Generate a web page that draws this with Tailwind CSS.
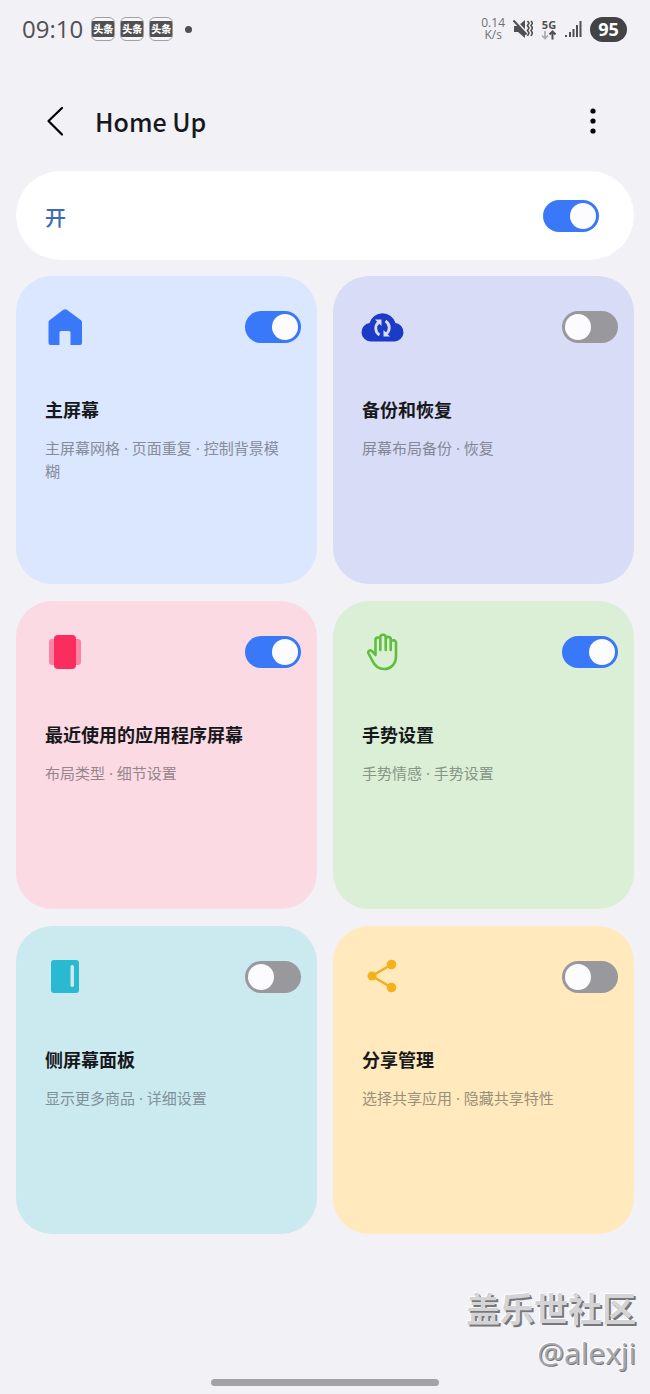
<!DOCTYPE html>
<html lang="zh-CN">
<head>
  <meta charset="UTF-8" />
  <meta name="viewport" content="width=device-width, initial-scale=1.0" />
  <title>Home Up</title>
  <script src="https://cdn.jsdelivr.net/npm/@tailwindcss/browser@4"></script>
</head>
<body class="min-h-screen flex flex-col bg-[#f1f1f6] text-[#17181c] font-['Noto_Sans_CJK_SC',sans-serif]">

  <!-- Status bar -->
  <div class="flex items-center justify-between h-[58px] pl-[22px] pr-[23px] text-[#505052]">
    <div class="flex items-center">
      <span class="text-[24px] leading-8 font-['Open_Sans',sans-serif]">09:10</span>
      <div class="flex gap-[5px] ml-2">
        <span class="flex items-center w-6 h-6 border border-[#a0a0a2] rounded-md bg-[#f7f7f9] overflow-hidden"><b class="w-full h-4 bg-[#505052] text-white text-[10px] leading-4 text-center font-black">头条</b></span>
        <span class="flex items-center w-6 h-6 border border-[#a0a0a2] rounded-md bg-[#f7f7f9] overflow-hidden"><b class="w-full h-4 bg-[#505052] text-white text-[10px] leading-4 text-center font-black">头条</b></span>
        <span class="flex items-center w-6 h-6 border border-[#a0a0a2] rounded-md bg-[#f7f7f9] overflow-hidden"><b class="w-full h-4 bg-[#505052] text-white text-[10px] leading-4 text-center font-black">头条</b></span>
      </div>
      <span class="w-[7px] h-[7px] ml-3 rounded-full bg-[#505052]"></span>
    </div>
    <div class="flex items-center font-['Open_Sans',sans-serif]">
      <div class="flex flex-col text-[12px] leading-3 text-center text-[#707072]">
        <span>0.14</span>
        <span>K/s</span>
      </div>
      <svg class="ml-2 w-5 h-5" viewBox="0 0 20 20" fill="none">
        <path d="M1 7h4l7-6v18l-7-6H1z" fill="currentColor" />
        <path d="M1.500 .5L15 15" stroke="#f1f1f6" stroke-width="2" />
        <path d="M.5 1.500l13 14" stroke="currentColor" stroke-width="2" />
        <path d="M14.500 2l1.500 2-1.500 2.500 1.500 2.500-1.500 2.500 1.500 2.500-1.500 3M18 2l1.500 2L18 6.500 19.500 9 18 11.500l1.500 2.500-1.500 3" stroke="currentColor" stroke-width="1.600" />
      </svg>
      <div class="flex flex-col items-center ml-2 w-4">
        <span class="text-[11px] leading-[11px] font-bold">5G</span>
        <svg class="w-4 h-[10px]" viewBox="0 0 16 10" fill="none" stroke-width="1.600">
          <path d="M4 1v7.500M1 5.500l3 3 3-3" stroke="#a8a8aa" />
          <path d="M11.500 9.500V1.500M8.500 4.500l3-3 3 3" stroke="currentColor" stroke-width="2" />
        </svg>
      </div>
      <svg class="ml-2 w-[18px] h-[18px]" viewBox="0 0 18 18" fill="currentColor">
        <rect x="0" y="15" width="2" height="2" />
        <rect x="4" y="12" width="2" height="5" />
        <rect x="7.500" y="9" width="2" height="8" />
        <rect x="11" y="5" width="2" height="12" />
        <rect x="14.500" y="1" width="2" height="16" />
      </svg>
      <span class="ml-[7px] w-[37px] h-[25px] rounded-full bg-[#434345] text-white text-[18px] leading-[25px] text-center font-bold">95</span>
    </div>
  </div>

  <!-- App bar -->
  <header class="flex items-center h-[113px] pt-3 pl-[43px] pr-[45px]">
    <button type="button" aria-label="返回" class="w-6 h-8">
      <svg class="w-6 h-8" viewBox="0 0 24 32" fill="none" stroke="#000" stroke-width="2.200" stroke-linecap="round" stroke-linejoin="round">
        <path d="M19 3L5.500 16 19 29.500" />
      </svg>
    </button>
    <h1 class="ml-7 text-[25px] leading-9 font-medium">Home Up</h1>
    <button type="button" aria-label="更多选项" class="ml-auto w-6 h-8 flex justify-center">
      <svg class="w-2 h-8" viewBox="0 0 8 32" fill="#000">
        <circle cx="4" cy="6" r="2.600" /><circle cx="4" cy="16" r="2.600" /><circle cx="4" cy="26" r="2.600" />
      </svg>
    </button>
  </header>

  <main class="px-4">
    <!-- Master switch -->
    <div class="flex items-center justify-between h-[89px] pl-[29px] pr-[35px] rounded-full bg-white">
      <label for="all" class="text-[21px] leading-8 font-medium text-[#3b6ab8]">开</label>
      <input id="all" type="checkbox" role="switch" checked class="appearance-none flex w-14 h-8 p-[3px] rounded-full bg-[#99999d] checked:bg-[#3a78fa] checked:justify-end before:w-[26px] before:h-[26px] before:rounded-full before:bg-[#fcfcfe]" />
    </div>

    <div class="grid grid-cols-2 gap-x-4 gap-y-[17px] mt-4">

      <section class="min-h-[308px] rounded-[36px] pt-[31px] pl-[29px] pr-4 bg-[#dae7ff]">
        <div class="flex items-center justify-between">
          <svg class="w-10 h-10" viewBox="0 0 40 40" fill="#3a78fa">
            <path d="M18.300 2.800a3 3 0 0 1 3.600 0L36 13.300a2.500 2.500 0 0 1 1 2V36a2 2 0 0 1-2 2h-9.500V25.500a1.500 1.500 0 0 0-1.500-1.500h-8a1.500 1.500 0 0 0-1.500 1.500V38H5.500a2 2 0 0 1-2-2V15.300a2.500 2.500 0 0 1 1-2z" />
          </svg>
          <input id="home" type="checkbox" role="switch" checked class="appearance-none flex w-14 h-8 p-[3px] rounded-full bg-[#99999d] checked:bg-[#3a78fa] checked:justify-end before:w-[26px] before:h-[26px] before:rounded-full before:bg-[#fcfcfe]" />
        </div>
        <label for="home" class="block mt-[50px] text-[18px] leading-6 font-bold">主屏幕</label>
        <p class="mt-4 pr-4 text-[15px] leading-[23px] text-[#868c99] font-['Noto_Sans','Noto_Sans_CJK_SC',sans-serif]">主屏幕网格 · 页面重复 · 控制背景模糊</p>
      </section>

      <section class="min-h-[308px] rounded-[36px] pt-[31px] pl-[29px] pr-4 bg-[#d8dcf6]">
        <div class="flex items-center justify-between">
          <svg class="w-10 h-10 overflow-visible" viewBox="0 0 40 40">
            <path d="M8.500 34.500a9.300 9.300 0 0 1-1-18.500 13.500 13.500 0 0 1 26 0 9.300 9.300 0 0 1-1 18.500z" fill="#1c3ac8" />
            <path d="M17.500 28a7.800 7.800 0 0 1-.5-13M23.500 14a7.800 7.800 0 0 1 .5 13" fill="none" stroke="#d8dcf6" stroke-width="2.800" />
            <path d="M13 12.500h6.500v6.500zM28 29.500h-6.500V23z" fill="#d8dcf6" />
          </svg>
          <input id="backup" type="checkbox" role="switch" class="appearance-none flex w-14 h-8 p-[3px] rounded-full bg-[#99999d] checked:bg-[#3a78fa] checked:justify-end before:w-[26px] before:h-[26px] before:rounded-full before:bg-[#fcfcfe]" />
        </div>
        <label for="backup" class="block mt-[50px] text-[18px] leading-6 font-bold">备份和恢复</label>
        <p class="mt-4 pr-4 text-[15px] leading-[23px] text-[#868796] font-['Noto_Sans','Noto_Sans_CJK_SC',sans-serif]">屏幕布局备份 · 恢复</p>
      </section>

      <section class="min-h-[308px] rounded-[36px] pt-[31px] pl-[29px] pr-4 bg-[#fbdae4]">
        <div class="flex items-center justify-between">
          <svg class="w-10 h-10" viewBox="0 0 40 40">
            <rect x="4" y="7" width="32" height="26" rx="3" fill="#fb84a3" />
            <rect x="9" y="3" width="22" height="34" rx="4" fill="#fb2d5f" />
          </svg>
          <input id="recents" type="checkbox" role="switch" checked class="appearance-none flex w-14 h-8 p-[3px] rounded-full bg-[#99999d] checked:bg-[#3a78fa] checked:justify-end before:w-[26px] before:h-[26px] before:rounded-full before:bg-[#fcfcfe]" />
        </div>
        <label for="recents" class="block mt-[50px] text-[18px] leading-6 font-bold">最近使用的应用程序屏幕</label>
        <p class="mt-4 pr-4 text-[15px] leading-[23px] text-[#96868c] font-['Noto_Sans','Noto_Sans_CJK_SC',sans-serif]">布局类型 · 细节设置</p>
      </section>

      <section class="min-h-[308px] rounded-[36px] pt-[31px] pl-[29px] pr-4 bg-[#daefd5]">
        <div class="flex items-center justify-between">
          <svg class="w-10 h-10" viewBox="0 0 40 40" fill="none" stroke="#5fbe3c" stroke-width="2.600" stroke-linecap="round" stroke-linejoin="round">
            <path d="M13.500 18V8a2.500 2.500 0 0 1 4.800-1M18.300 18V5.500a2.700 2.700 0 0 1 5.400 0V18M23.700 7a2.500 2.500 0 0 1 5 1v10M28.700 10.500a2.400 2.400 0 0 1 5.300 1V24c0 8-5 13-12 13-6 0-9.500-3.500-12-9L6.500 21.500c-1-2.800 2-4.200 4-1.800l3 3.300V18" />
          </svg>
          <input id="gesture" type="checkbox" role="switch" checked class="appearance-none flex w-14 h-8 p-[3px] rounded-full bg-[#99999d] checked:bg-[#3a78fa] checked:justify-end before:w-[26px] before:h-[26px] before:rounded-full before:bg-[#fcfcfe]" />
        </div>
        <label for="gesture" class="block mt-[50px] text-[18px] leading-6 font-bold">手势设置</label>
        <p class="mt-4 pr-4 text-[15px] leading-[23px] text-[#879486] font-['Noto_Sans','Noto_Sans_CJK_SC',sans-serif]">手势情感 · 手势设置</p>
      </section>

      <section class="min-h-[308px] rounded-[36px] pt-[31px] pl-[29px] pr-4 bg-[#cbeaef]">
        <div class="flex items-center justify-between">
          <svg class="w-10 h-10" viewBox="0 0 40 40">
            <rect x="6" y="3" width="28" height="33" rx="3" fill="#29b9d0" />
            <rect x="25.500" y="8" width="3.500" height="22" rx="1.700" fill="#cbeaef" />
          </svg>
          <input id="edge" type="checkbox" role="switch" class="appearance-none flex w-14 h-8 p-[3px] rounded-full bg-[#99999d] checked:bg-[#3a78fa] checked:justify-end before:w-[26px] before:h-[26px] before:rounded-full before:bg-[#fcfcfe]" />
        </div>
        <label for="edge" class="block mt-[50px] text-[18px] leading-6 font-bold">侧屏幕面板</label>
        <p class="mt-4 pr-4 text-[15px] leading-[23px] text-[#7f9297] font-['Noto_Sans','Noto_Sans_CJK_SC',sans-serif]">显示更多商品 · 详细设置</p>
      </section>

      <section class="min-h-[308px] rounded-[36px] pt-[31px] pl-[29px] pr-4 bg-[#ffe9bd]">
        <div class="flex items-center justify-between">
          <svg class="w-10 h-10" viewBox="0 0 40 40" fill="#f5b01c">
            <path d="M29.500 7.500L10 19 29.500 30.500" fill="none" stroke="#f5b01c" stroke-width="2.600" />
            <circle cx="29.500" cy="7.500" r="4.800" /><circle cx="10" cy="19" r="4.500" /><circle cx="29.500" cy="30.500" r="4.800" />
          </svg>
          <input id="share" type="checkbox" role="switch" class="appearance-none flex w-14 h-8 p-[3px] rounded-full bg-[#99999d] checked:bg-[#3a78fa] checked:justify-end before:w-[26px] before:h-[26px] before:rounded-full before:bg-[#fcfcfe]" />
        </div>
        <label for="share" class="block mt-[50px] text-[18px] leading-6 font-bold">分享管理</label>
        <p class="mt-4 pr-4 text-[15px] leading-[23px] text-[#999079] font-['Noto_Sans','Noto_Sans_CJK_SC',sans-serif]">选择共享应用 · 隐藏共享特性</p>
      </section>

    </div>
  </main>

  <!-- Community signature and gesture bar -->
  <footer class="mt-auto pb-2">
    <div class="pr-[14px] text-right text-[#d4d4d6]">
      <p class="text-[34px] leading-[46px] font-bold [text-shadow:2px_2px_0_#77777a,-1px_-1px_0_#fff]">盖乐世社区</p>
      <p class="text-[30px] leading-[44px] font-['Open_Sans',sans-serif] text-[#a8a8aa] [text-shadow:1px_1px_0_#77777a,-1px_-1px_0_#fff]">@alexji</p>
    </div>
    <div class="w-[228px] h-[7px] mt-1 mx-auto rounded-full bg-[#a3a3a6]"></div>
  </footer>

</body>
</html>
